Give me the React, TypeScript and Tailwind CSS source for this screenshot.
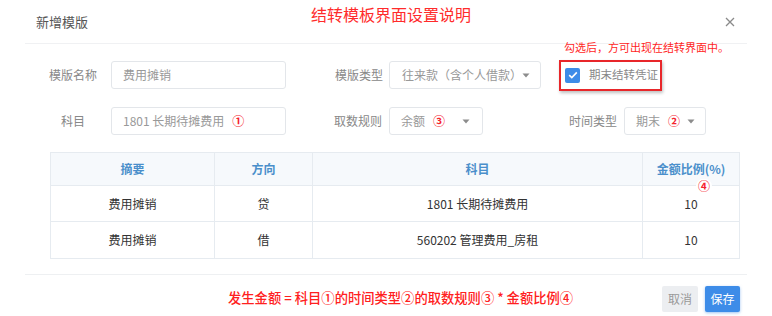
import React from "react";

const Caret = () => (
  <svg width="8" height="5" viewBox="0 0 8 5" className="shrink-0">
    <path d="M0.5 0.5 L7.5 0.5 L4 4.5 Z" fill="#8c8c8c" />
  </svg>
);

const Circ = ({ c }: { c: string }) => (
  <span className="text-[#f5222d] text-[12px] font-semibold ml-[8px]">{c}</span>
);

export default function App() {
  const font = { fontFamily: '"Noto Sans CJK SC", "Noto Sans", sans-serif' };
  return (
    <div className="relative w-[772px] h-[316px] bg-white overflow-hidden" style={font}>
      {/* annotation title */}
      <div className="absolute left-0 right-0 top-[3px] text-center text-[16px] text-[#ff2b2b] leading-[22px] pl-[10px]">
        结转模板界面设置说明
      </div>
      <div className="absolute left-[564px] top-[39px] text-[11px] leading-[16px] text-[#ff1f1f]">
        勾选后，方可出现在结转界面中。
      </div>

      {/* header */}
      <div className="mx-[25px] h-[44px] flex items-center border-b border-[#f0f1f3]">
        <span className="ml-[11px] text-[13px] text-[#555]">新增模版</span>
        <svg width="10" height="10" viewBox="0 0 10 10" className="ml-auto mr-[12px] mt-[1px]">
          <path d="M1 1 L9 9 M9 1 L1 9" stroke="#8a8a8a" strokeWidth="1.3" />
        </svg>
      </div>

      {/* row 1 */}
      <div className="flex items-center mt-[17px] h-[28px] text-[12px]">
        <div className="ml-[37px] w-[72px] text-center text-[#888]">模版名称</div>
        <div className="ml-[2px] w-[175px] h-[28px] border border-[#e3e6ea] rounded-[3px] flex items-center pl-[11px] text-[#999]">
          费用摊销
        </div>
        <div className="ml-[49px] w-[48px] text-[#888]">模版类型</div>
        <div className="ml-[6px] w-[152px] h-[28px] border border-[#e3e6ea] rounded-[3px] flex items-center pl-[12px] pr-[10px] text-[#999] whitespace-nowrap">
          <span>往来款（含个人借款）</span>
          <span className="ml-auto"><Caret /></span>
        </div>
        <div className="ml-[18px] w-[103px] h-[31px] border-2 border-[#e8262a] flex items-center pl-[4px] shadow-[1px_2px_3px_rgba(0,0,0,0.25)] whitespace-nowrap">
          <div className="w-[15px] h-[15px] shrink-0 rounded-[2px] bg-[#3d8ce8] flex items-center justify-center">
            <svg width="10" height="8" viewBox="0 0 10 8">
              <path d="M1.2 4.2 L3.8 6.6 L8.8 1.4" stroke="white" strokeWidth="1.6" fill="none" />
            </svg>
          </div>
          <span className="ml-[9px] text-[#888] text-[11.5px]">期末结转凭证</span>
        </div>
      </div>

      {/* row 2 */}
      <div className="flex items-center mt-[18px] h-[28px] text-[12px]">
        <div className="ml-[37px] w-[72px] text-center text-[#888]">科目</div>
        <div className="ml-[2px] w-[175px] h-[28px] border border-[#e3e6ea] rounded-[3px] flex items-center pl-[11px] text-[#999]">
          1801 长期待摊费用
          <Circ c="①" />
        </div>
        <div className="ml-[48px] w-[48px] text-[#888]">取数规则</div>
        <div className="ml-[7px] w-[94px] h-[28px] border border-[#e3e6ea] rounded-[3px] flex items-center pl-[11px] pr-[12px] text-[#999]">
          <span>余额</span>
          <Circ c="③" />
          <span className="ml-auto"><Caret /></span>
        </div>
        <div className="ml-[86px] w-[48px] text-[#888]">时间类型</div>
        <div className="ml-[7px] w-[82px] h-[28px] border border-[#e3e6ea] rounded-[3px] flex items-center pl-[11px] pr-[10px] text-[#999]">
          <span>期末</span>
          <Circ c="②" />
          <span className="ml-auto"><Caret /></span>
        </div>
      </div>

      {/* table */}
      <div className="relative ml-[50px] mt-[17px] w-[690px] border border-[#e6ebf0] text-[12px]">
        <div className="grid grid-cols-[164px_98px_330px_1fr] h-[33px] bg-[#f6f9fc] text-[#4a8fcb] font-semibold border-b border-[#e6ebf0]">
          <div className="flex items-center justify-center border-r border-[#e6ebf0]">摘要</div>
          <div className="flex items-center justify-center border-r border-[#e6ebf0]">方向</div>
          <div className="flex items-center justify-center border-r border-[#e6ebf0]">科目</div>
          <div className="flex items-center justify-center">金额比例(%)</div>
        </div>
        <div className="grid grid-cols-[164px_98px_330px_1fr] h-[36px] text-[#333] border-b border-[#e6ebf0]">
          <div className="flex items-center justify-center border-r border-[#e6ebf0]">费用摊销</div>
          <div className="flex items-center justify-center border-r border-[#e6ebf0]">贷</div>
          <div className="flex items-center justify-center border-r border-[#e6ebf0]">1801 长期待摊费用</div>
          <div className="flex items-center justify-center">10</div>
        </div>
        <div className="grid grid-cols-[164px_98px_330px_1fr] h-[36px] text-[#333]">
          <div className="flex items-center justify-center border-r border-[#e6ebf0]">费用摊销</div>
          <div className="flex items-center justify-center border-r border-[#e6ebf0]">借</div>
          <div className="flex items-center justify-center border-r border-[#e6ebf0]">560202 管理费用_房租</div>
          <div className="flex items-center justify-center">10</div>
        </div>
        <span className="absolute left-[645px] top-[26px] bg-white rounded-full px-[2px] text-[#f5222d] text-[12px] leading-[14px] font-semibold">
          ④
        </span>
      </div>

      {/* footer */}
      <div className="mx-[25px] mt-[15px] border-t border-[#eef0f2] flex items-start pt-[11px]">
        <div className="ml-[203px] mt-[2px] text-[13.3px] text-[#ff2020] font-medium leading-[20px] whitespace-nowrap">
          发生金额 = 科目①的时间类型②的取数规则③ * 金额比例④
        </div>
        <div className="ml-auto mr-[7px] flex gap-[7px]">
          <div className="w-[36px] h-[26px] bg-[#eceef1] rounded-[2px] flex items-center justify-center text-[12px] text-[#999]">取消</div>
          <div className="w-[35px] h-[26px] bg-[#3d8ce8] rounded-[2px] flex items-center justify-center text-[12px] text-white shadow-[0_1px_3px_rgba(61,140,232,0.5)]">保存</div>
        </div>
      </div>
    </div>
  );
}
